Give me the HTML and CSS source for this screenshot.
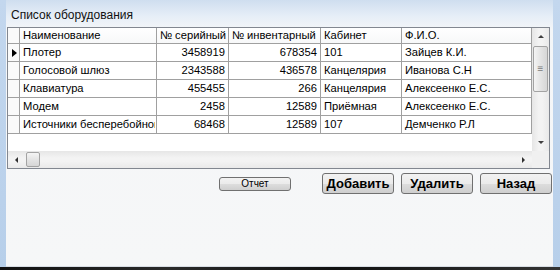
FILE: index.html
```html
<!DOCTYPE html>
<html lang="ru">
<head>
  <meta charset="UTF-8">
  <title>Список оборудования</title>
  <link rel="stylesheet" href="styles.css">
</head>
<body>
  <div class="window">
    <div class="frame-side"></div>
    <div class="client">
      <div class="caption">Список оборудования</div>

      <div class="grid">
        <div class="view">
          <table class="data">
            <colgroup>
              <col style="width: 12px">
              <col style="width: 137px">
              <col style="width: 72px">
              <col style="width: 92px">
              <col style="width: 81px">
              <col style="width: 130px">
            </colgroup>
            <thead>
              <tr>
                <th class="rh"></th>
                <th>Наименование</th>
                <th>№ серийный</th>
                <th>№ инвентарный</th>
                <th>Кабинет</th>
                <th>Ф.И.О.</th>
              </tr>
            </thead>
            <tbody>
              <tr>
                <td class="rh current"><span class="marker"></span></td>
                <td>Плотер</td>
                <td class="num">3458919</td>
                <td class="num">678354</td>
                <td>101</td>
                <td>Зайцев К.И.</td>
              </tr>
              <tr>
                <td class="rh"></td>
                <td>Голосовой шлюз</td>
                <td class="num">2343588</td>
                <td class="num">436578</td>
                <td>Канцелярия</td>
                <td>Иванова С.Н</td>
              </tr>
              <tr>
                <td class="rh"></td>
                <td>Клавиатура</td>
                <td class="num">455455</td>
                <td class="num">266</td>
                <td>Канцелярия</td>
                <td>Алексеенко Е.С.</td>
              </tr>
              <tr>
                <td class="rh"></td>
                <td>Модем</td>
                <td class="num">2458</td>
                <td class="num">12589</td>
                <td>Приёмная</td>
                <td>Алексеенко Е.С.</td>
              </tr>
              <tr>
                <td class="rh"></td>
                <td><div class="clip">Источники бесперебойного питания</div></td>
                <td class="num">68468</td>
                <td class="num">12589</td>
                <td>107</td>
                <td>Демченко Р.Л</td>
              </tr>
            </tbody>
          </table>
        </div>

        <div class="vscroll">
          <div class="arrow"><span class="tri up"></span></div>
          <div class="track">
            <div class="thumb v-thumb"><span class="grip">≡</span></div>
          </div>
          <div class="arrow"><span class="tri down"></span></div>
        </div>

        <div class="hscroll">
          <div class="arrow"><span class="tri left"></span></div>
          <div class="track">
            <div class="thumb h-thumb"></div>
          </div>
          <div class="arrow"><span class="tri right"></span></div>
        </div>

        <div class="corner"></div>
      </div>

      <div class="buttons">
        <button class="report">Отчет</button>
        <button class="big">Добавить</button>
        <button class="big">Удалить</button>
        <button class="big">Назад</button>
      </div>
    </div>
    <div class="frame-side right"></div>
  </div>
  <div class="taskbar"></div>
</body>
</html>
```

FILE: styles.css
```css
body {
  margin: 0;
  width: 560px;
  height: 270px;
  overflow: hidden;
  font-family: "Liberation Sans", Arial, sans-serif;
  font-size: 12px;
  color: #000;
  background: #1c1c1c;
}

.window {
  display: flex;
  height: 267px;
}

.frame-side {
  width: 6px;
  background: linear-gradient(#c3d7ee, #b7cfea);
}

.frame-side.right {
  width: 7px;
}

.client {
  width: 547px;
  padding: 0 0 0 1px;
  box-sizing: border-box;
  background: linear-gradient(#cfdeef 0, #e6eef7 16px, #f4f6f8 30px, #f6f7f8 100%);
  border-bottom: 1px solid #d8dde4;
}

.caption {
  padding: 7px 0 0 4px;
  height: 16px;
  line-height: 16px;
  font-size: 12px;
  color: #111;
}

.taskbar {
  height: 3px;
  background: linear-gradient(90deg, #111 0, #2a2a2a 30%, #111 60%, #333 100%);
}

/* таблица */

.grid {
  margin-top: 4px;
  width: 543px;
  height: 142px;
  box-sizing: border-box;
  border: 1px solid #828790;
  background: #fff;
  display: grid;
  grid-template-columns: 1fr 17px;
  grid-template-rows: 1fr 17px;
}

.view {
  overflow: hidden;
  background: #fff;
}

.data {
  table-layout: fixed;
  width: 524px;
  border-collapse: separate;
  border-spacing: 0;
  font-size: 11.2px;
}

.data th,
.data td {
  padding: 0 2px 0 3px;
  white-space: nowrap;
  overflow: hidden;
  border-right: 1px solid #a0a0a0;
  border-bottom: 1px solid #a0a0a0;
  text-align: left;
  font-weight: normal;
}

.data thead tr {
  height: 16px;
}

.data th {
  line-height: 15px;
  background: linear-gradient(#ffffff, #f7f8f9);
}

.data tbody tr {
  height: 18px;
}

.data td {
  line-height: 17px;
}

.data td.num {
  text-align: right;
  padding-right: 3px;
}

.clip {
  width: 132px;
  overflow: hidden;
}

.data .rh {
  padding: 0;
  position: relative;
  background: #fafafa;
}

.data td.rh::after {
  content: "";
  position: absolute;
  left: 0;
  bottom: -1px;
  width: 8px;
  height: 1px;
  background: #000;
}

.marker {
  display: block;
  width: 0;
  height: 0;
  margin-left: 4px;
  border-top: 4px solid transparent;
  border-bottom: 4px solid transparent;
  border-left: 5px solid #000;
}

/* полосы прокрутки */

.vscroll,
.hscroll {
  display: flex;
  background: linear-gradient(90deg, #e6e6e6, #f3f3f3 40%, #f3f3f3 60%, #e9e9e9);
}

.vscroll {
  flex-direction: column;
}

.hscroll {
  background: linear-gradient(#e6e6e6, #f3f3f3 40%, #f3f3f3 60%, #e9e9e9);
}

.corner {
  background: #f0f0f0;
}

.arrow {
  width: 17px;
  height: 17px;
  flex: none;
  display: flex;
  align-items: center;
  justify-content: center;
}

.track {
  flex: 1;
  display: flex;
}

.vscroll .track {
  flex-direction: column;
  padding-top: 1px;
}

.hscroll .track {
  padding-left: 1px;
}

.thumb {
  box-sizing: border-box;
  border: 1px solid #a3a3a3;
  border-radius: 2px;
}

.v-thumb {
  height: 46px;
  margin: 0 1px;
  background: linear-gradient(90deg, #f4f4f4, #e4e4e4 50%, #d6d6d6);
  display: flex;
  align-items: center;
  justify-content: center;
}

.h-thumb {
  width: 14px;
  margin: 1px 0;
  background: linear-gradient(#f4f4f4, #e4e4e4 50%, #d6d6d6);
}

.grip {
  font-size: 10px;
  line-height: 10px;
  color: #7a7a7a;
}

.tri {
  width: 0;
  height: 0;
}

.tri.up {
  border-left: 3px solid transparent;
  border-right: 3px solid transparent;
  border-bottom: 3px solid #404040;
}

.tri.down {
  border-left: 3px solid transparent;
  border-right: 3px solid transparent;
  border-top: 3px solid #404040;
}

.tri.left {
  border-top: 3px solid transparent;
  border-bottom: 3px solid transparent;
  border-right: 3px solid #303030;
}

.tri.right {
  border-top: 3px solid transparent;
  border-bottom: 3px solid transparent;
  border-left: 3px solid #303030;
}

/* кнопки */

.buttons {
  display: flex;
  align-items: center;
  justify-content: flex-end;
  gap: 7px;
  margin-top: 4px;
  padding-right: 1px;
}

button {
  font-family: "Liberation Sans", Arial, sans-serif;
  color: #000;
  border: 1px solid #707070;
  border-radius: 3px;
  background: linear-gradient(#f2f2f2 0, #ebebeb 50%, #dddddd 51%, #cfcfcf 100%);
  padding: 0;
  cursor: pointer;
}

.report {
  width: 72px;
  height: 14px;
  font-size: 10px;
  line-height: 12px;
  margin-right: 24px;
}

.big {
  width: 72px;
  height: 21px;
  font-size: 13px;
  font-weight: bold;
}

.big:first-of-type {
  width: 71px;
}
```
